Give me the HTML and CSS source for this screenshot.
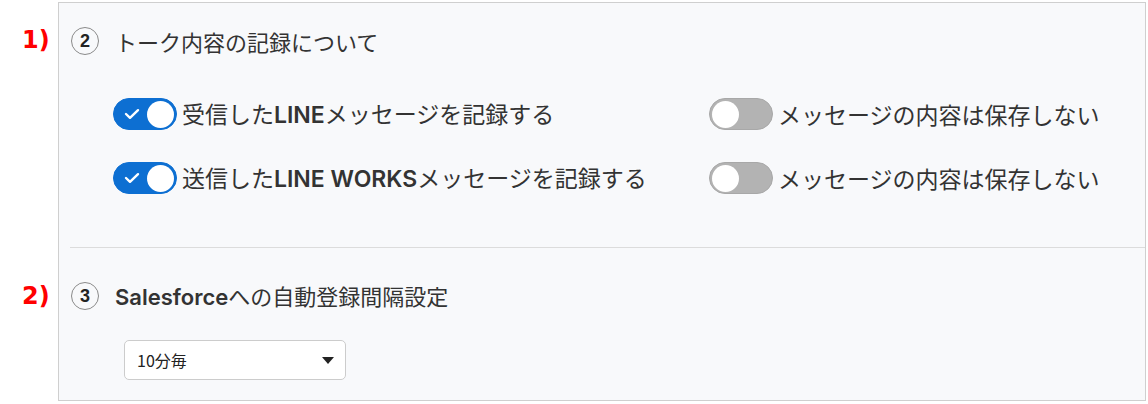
FILE: index.html
```html
<!DOCTYPE html>
<html lang="ja">
<head>
<meta charset="utf-8">
<link rel="stylesheet" href="styles.css">
</head>
<body>
<div class="panel">
  <section class="section first">
    <span class="note">1)</span>
    <h2 class="heading"><span class="num">2</span><span>トーク内容の記録について</span></h2>
    <div class="rows">
      <div class="row">
        <div class="opt">
          <span class="toggle on">
            <svg class="check" viewBox="0 0 16 12" width="16" height="12"><path d="M2 6 L6 9.8 L14 2.2" fill="none" stroke="#fff" stroke-width="2.4" stroke-linecap="round" stroke-linejoin="round"/></svg>
            <span class="knob"></span>
          </span>
          <span class="label">受信した<span class="latin">LINE</span>メッセージを記録する</span>
        </div>
        <div class="opt">
          <span class="toggle off"><span class="knob"></span></span>
          <span class="label">メッセージの内容は保存しない</span>
        </div>
      </div>
      <div class="row">
        <div class="opt">
          <span class="toggle on">
            <svg class="check" viewBox="0 0 16 12" width="16" height="12"><path d="M2 6 L6 9.8 L14 2.2" fill="none" stroke="#fff" stroke-width="2.4" stroke-linecap="round" stroke-linejoin="round"/></svg>
            <span class="knob"></span>
          </span>
          <span class="label">送信した<span class="latin">LINE WORKS</span>メッセージを記録する</span>
        </div>
        <div class="opt">
          <span class="toggle off"><span class="knob"></span></span>
          <span class="label">メッセージの内容は保存しない</span>
        </div>
      </div>
    </div>
  </section>
  <hr class="divider">
  <section class="section second">
    <span class="note">2)</span>
    <h2 class="heading"><span class="num">3</span><span><span class="latin">Salesforce</span>への自動登録間隔設定</span></h2>
    <div class="select">
      <span class="select-text">10分毎</span>
      <span class="caret"></span>
    </div>
  </section>
</div>
</body>
</html>
```

FILE: styles.css
```css
html, body {
  margin: 0;
  padding: 0;
  background: #ffffff;
}

body {
  width: 1148px;
  height: 404px;
  overflow: hidden;
  font-family: "Noto Sans CJK JP", "Noto Sans", sans-serif;
  color: #333333;
}

.panel {
  margin: 2px 0 0 58px;
  width: 1086px;
  height: 397px;
  border: 1px solid #cfcfcf;
  background: #f8f9fb;
  display: flex;
  flex-direction: column;
}

.section {
  position: relative;
  padding-left: 12px;
}

.section.first {
  padding-top: 24px;
  padding-bottom: 54px;
}

.section.second {
  padding-top: 34px;
}

.note {
  position: absolute;
  left: -37px;
  font-family: "DejaVu Sans", "Noto Sans", sans-serif;
  font-weight: 700;
  font-size: 24px;
  line-height: 28px;
  color: #ff0000;
}

.first .note { top: 23px; }
.second .note { top: 34px; }

.heading {
  margin: 0;
  display: flex;
  align-items: center;
  gap: 16px;
  height: 28px;
  font-size: 22px;
  font-weight: 400;
  line-height: 28px;
  color: #333333;
}

.num {
  box-sizing: border-box;
  width: 28px;
  height: 28px;
  border: 1px solid #8a8a8a;
  border-radius: 50%;
  display: flex;
  align-items: center;
  justify-content: center;
  font-family: "Liberation Sans", "Noto Sans", sans-serif;
  font-weight: 700;
  font-size: 18px;
  color: #222222;
}

.latin {
  font-family: "Inter", "Noto Sans", sans-serif;
  font-weight: 600;
}

.rows {
  margin-top: 42px;
  padding-left: 42px;
  display: flex;
  flex-direction: column;
  gap: 32px;
}

.row {
  display: grid;
  grid-template-columns: 596px 1fr;
  height: 32px;
}

.opt {
  display: flex;
  align-items: center;
  gap: 5px;
}

.label {
  font-size: 23px;
  line-height: 32px;
  white-space: nowrap;
}

.toggle {
  box-sizing: border-box;
  position: relative;
  width: 64px;
  height: 32px;
  border-radius: 16px;
  display: flex;
  align-items: center;
  padding: 2px;
  flex: none;
}

.toggle.on {
  background: #0d6fd2;
  border: 1px solid #0d6fd2;
  justify-content: space-between;
  padding-left: 10px;
}

.toggle.off {
  background: #b3b3b3;
  border: 1px solid #a8a8a8;
  justify-content: flex-start;
}

.knob {
  width: 27px;
  height: 27px;
  border-radius: 50%;
  background: #ffffff;
}

.check {
  display: block;
}

.divider {
  margin: 0 0 0 11px;
  border: 0;
  border-top: 1px solid #dcdcdc;
  height: 0;
}

.select {
  box-sizing: border-box;
  margin: 30px 0 0 53px;
  width: 222px;
  height: 40px;
  border: 1px solid #cccccc;
  border-radius: 5px;
  background: #ffffff;
  display: flex;
  align-items: center;
  justify-content: space-between;
  padding: 0 11px 0 12px;
}

.select-text {
  font-size: 16px;
  color: #222222;
}

.caret {
  width: 0;
  height: 0;
  border-left: 6px solid transparent;
  border-right: 6px solid transparent;
  border-top: 7px solid #222222;
}
```
